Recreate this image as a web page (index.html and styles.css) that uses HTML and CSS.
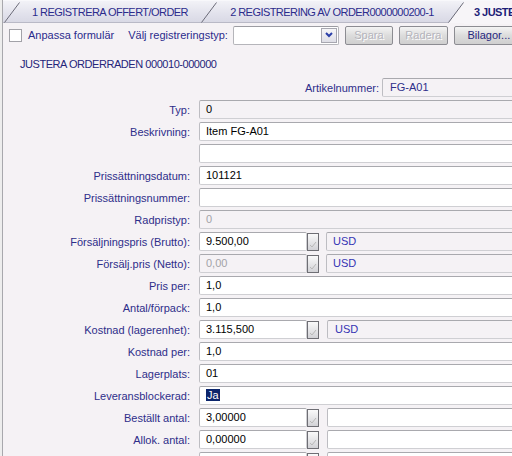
FILE: index.html
```html
<!DOCTYPE html>
<html lang="sv">
<head>
<meta charset="utf-8">
<title>Justera orderraden</title>
<link rel="stylesheet" href="styles.css">
</head>
<body>
<div class="window">
  <div class="tabs">
    <div class="tab tab1">
      <svg class="slant" width="17" height="22" viewBox="0 0 17 22"><line x1="1.5" y1="21.5" x2="16.5" y2="1.5" stroke="#6b6b78" stroke-width="1"/></svg>
      <span class="tab-label">1 REGISTRERA OFFERT/ORDER</span>
    </div>
    <div class="tab tab2">
      <svg class="slant" width="17" height="22" viewBox="0 0 17 22"><line x1="1.5" y1="21.5" x2="16.5" y2="1.5" stroke="#6b6b78" stroke-width="1"/></svg>
      <span class="tab-label">2 REGISTRERING AV ORDER0000000200-1</span>
    </div>
    <div class="tab tab3 active">
      <svg class="slant" width="17" height="22" viewBox="0 0 17 22"><polygon points="1.5,22 16.5,1.5 17,1.5 17,22" fill="#f7f5f8"/><line x1="1.5" y1="21.5" x2="16.5" y2="1.5" stroke="#6b6b78" stroke-width="1"/></svg>
      <span class="tab-label">3 JUSTERA ORDERRAD</span>
    </div>
  </div>

  <div class="toolbar">
    <span class="checkbox"></span>
    <span class="tb-label">Anpassa formulär</span>
    <span class="tb-label tb-gap">Välj registreringstyp:</span>
    <div class="select">
      <span class="select-btn"><svg width="8" height="6" viewBox="0 0 8 6"><polyline points="1,1 4,4 7,1" fill="none" stroke="#2b3fa8" stroke-width="2"/></svg></span>
    </div>
    <button class="btn btn-spara disabled">Spara</button>
    <button class="btn btn-radera disabled">Radera</button>
    <button class="btn btn-bilagor">Bilagor...</button>
  </div>

  <div class="content">
    <div class="title">JUSTERA ORDERRADEN 000010-000000</div>
    <div class="form">
      <div class="row row-art"><label>Artikelnummer:</label><div class="field ro wide">FG-A01</div></div>
      <div class="row"><label>Typ:</label><div class="field ro wide">0</div></div>
      <div class="row"><label>Beskrivning:</label><div class="field wide">Item FG-A01</div></div>
      <div class="row"><label></label><div class="field wide"></div></div>
      <div class="row"><label>Prissättningsdatum:</label><div class="field wide">101121</div></div>
      <div class="row"><label>Prissättningsnummer:</label><div class="field wide"></div></div>
      <div class="row"><label>Radpristyp:</label><div class="field ro grey wide">0</div></div>
      <div class="row"><label>Försäljningspris (Brutto):</label>
        <div class="combo"><div class="field num">9.500,00</div><span class="mini"><svg width="8" height="8" viewBox="0 0 8 8"><polyline points="1,5 3,7 7,2" fill="none" stroke="#b8b8b8" stroke-width="1"/></svg></span><div class="field ro cur">USD</div></div>
      </div>
      <div class="row"><label>Försälj.pris (Netto):</label>
        <div class="combo"><div class="field ro grey num">0,00</div><span class="mini"><svg width="8" height="8" viewBox="0 0 8 8"><polyline points="1,5 3,7 7,2" fill="none" stroke="#b8b8b8" stroke-width="1"/></svg></span><div class="field ro cur">USD</div></div>
      </div>
      <div class="row"><label>Pris per:</label><div class="field wide">1,0</div></div>
      <div class="row"><label>Antal/förpack:</label><div class="field wide">1,0</div></div>
      <div class="row"><label>Kostnad (lagerenhet):</label>
        <div class="combo"><div class="field num">3.115,500</div><span class="mini"><svg width="8" height="8" viewBox="0 0 8 8"><polyline points="1,5 3,7 7,2" fill="none" stroke="#b8b8b8" stroke-width="1"/></svg></span><div class="field ro cur cur2">USD</div></div>
      </div>
      <div class="row"><label>Kostnad per:</label><div class="field wide">1,0</div></div>
      <div class="row"><label>Lagerplats:</label><div class="field wide">01</div></div>
      <div class="row"><label>Leveransblockerad:</label><div class="field wide"><span class="sel">Ja</span></div></div>
      <div class="row"><label>Beställt antal:</label>
        <div class="combo"><div class="field num">3,00000</div><span class="mini"><svg width="8" height="8" viewBox="0 0 8 8"><polyline points="1,5 3,7 7,2" fill="none" stroke="#b8b8b8" stroke-width="1"/></svg></span><div class="field cur cur2"></div></div>
      </div>
      <div class="row"><label>Allok. antal:</label>
        <div class="combo"><div class="field num">0,00000</div><span class="mini"><svg width="8" height="8" viewBox="0 0 8 8"><polyline points="1,5 3,7 7,2" fill="none" stroke="#b8b8b8" stroke-width="1"/></svg></span><div class="field cur cur2"></div></div>
      </div>
      <div class="row"><label></label>
        <div class="combo"><div class="field num"></div><span class="mini"></span><div class="field cur cur2"></div></div>
      </div>
    </div>
  </div>
</div>
</body>
</html>
```
FILE: styles.css
```css
html, body {
  margin: 0;
  padding: 0;
}
body {
  width: 512px;
  height: 456px;
  overflow: hidden;
  background: #ededed;
  font-family: "Liberation Sans", Arial, sans-serif;
  font-size: 11px;
  color: #000;
}
.window {
  margin-left: 2px;
  border-left: 1px solid #a8a8ad;
  background: #f5f2f5;
  height: 456px;
  overflow: hidden;
}

/* Tabs */
.tabs {
  display: flex;
  height: 23px;
  background: linear-gradient(#f2f2f7, #e2e2ec 60%, #d9d9e5);
  border-top: 1px solid #f8f8fb;
  box-sizing: border-box;
  border-bottom: 1px solid #b9b9c6;
  white-space: nowrap;
}
.tab {
  display: flex;
  align-items: center;
  flex: none;
  color: #2b2b8c;
  height: 22px;
}
.tab1 { width: 197px; }
.tab2 { width: 247px; }
.tab3 { flex: 1; min-width: 0; }
.slant {
  flex: none;
  display: block;
}
.tab-label {
  flex: 1;
  text-align: center;
  letter-spacing: -0.55px;
  overflow: hidden;
}
.tab1 .tab-label { padding-left: 0; }
.tab.active .tab-label {
  text-align: left;
  padding-left: 10px;
  font-weight: bold;
  background: #f7f5f8;
  align-self: stretch;
  line-height: 22px;
  height: 23px;
  color: #1e1e78;
}

/* Toolbar */
.toolbar {
  display: flex;
  align-items: center;
  height: 24px;
  padding-left: 6px;
  white-space: nowrap;
}
.checkbox {
  width: 13px;
  height: 13px;
  box-sizing: border-box;
  border: 1px solid #a2a2a8;
  background: #fff;
  margin-right: 6px;
  flex: none;
}
.tb-label {
  color: #2b2b8c;
}
.tb-gap {
  margin-left: 14px;
}
.select {
  margin-left: 5px;
  width: 106px;
  height: 19px;
  box-sizing: border-box;
  border: 1px solid #b5b5ba;
  border-top-color: #9c9ca2;
  border-radius: 2px;
  background: #fff;
  display: flex;
  justify-content: flex-end;
  align-items: center;
  padding-right: 1px;
  flex: none;
}
.select-btn {
  width: 16px;
  height: 15px;
  box-sizing: border-box;
  border: 1px solid #a7a7b0;
  background: linear-gradient(#f6f6f8, #dedee6);
  display: flex;
  align-items: center;
  justify-content: center;
}
.btn {
  margin: 0 0 0 6px;
  height: 19px;
  box-sizing: border-box;
  border: 1px solid #8c8c92;
  border-radius: 2px;
  background: linear-gradient(#f4f4f4, #dcdcdc 50%, #cfcfcf);
  font-family: "Liberation Sans", Arial, sans-serif;
  font-size: 11px;
  padding: 0;
  color: #26267e;
  flex: none;
}
.btn.disabled {
  color: #b4b4bc;
  text-shadow: 1px 1px 0 #fff;
}
.btn-spara { width: 48px; }
.btn-radera { width: 49px; }
.btn-bilagor { width: 70px; }

/* Content */
.content {
  padding-top: 10px;
}
.title {
  padding-left: 17px;
  line-height: 15px;
  color: #25257a;
  letter-spacing: -0.45px;
  white-space: nowrap;
}
.form {
  margin-top: 6px;
  display: flex;
  flex-direction: column;
  gap: 3px;
}
.row {
  display: flex;
  align-items: center;
  height: 19px;
  gap: 9px;
  white-space: nowrap;
}
.row label {
  width: 187px;
  flex: none;
  text-align: right;
  color: #2e2e8a;
}
.row-art {
  gap: 3px;
}
.row-art label {
  width: 376px;
}
.field {
  height: 19px;
  box-sizing: border-box;
  border: 1px solid #cfcfd3;
  border-top-color: #a9a9ae;
  border-left-color: #bdbdc2;
  border-radius: 2px;
  background: #fff;
  padding-left: 6px;
  line-height: 17px;
  flex: none;
  overflow: hidden;
  color: #000;
}
.field.ro {
  background: #f5f2f5;
}
.field.grey {
  color: #a3a3a8;
}
.wide { width: 340px; }
.row-art .field { color: #2e2e8a; padding-left: 7px; }
.combo {
  display: flex;
  align-items: center;
  flex: none;
}
.num { width: 108px; }
.mini {
  width: 12px;
  height: 18px;
  box-sizing: border-box;
  border: 1px solid #6e6e74;
  background: linear-gradient(#fafafa, #d2d2d6);
  margin-left: 0;
  display: flex;
  align-items: flex-end;
  justify-content: center;
  padding-bottom: 2px;
  flex: none;
}
.cur {
  width: 200px;
  margin-left: 7px;
  color: #3434b4;
}
.cur2 { margin-left: 8px; padding-left: 7px; }
.sel {
  background: #0b246b;
  color: #fff;
  padding: 0 1px;
}
```
